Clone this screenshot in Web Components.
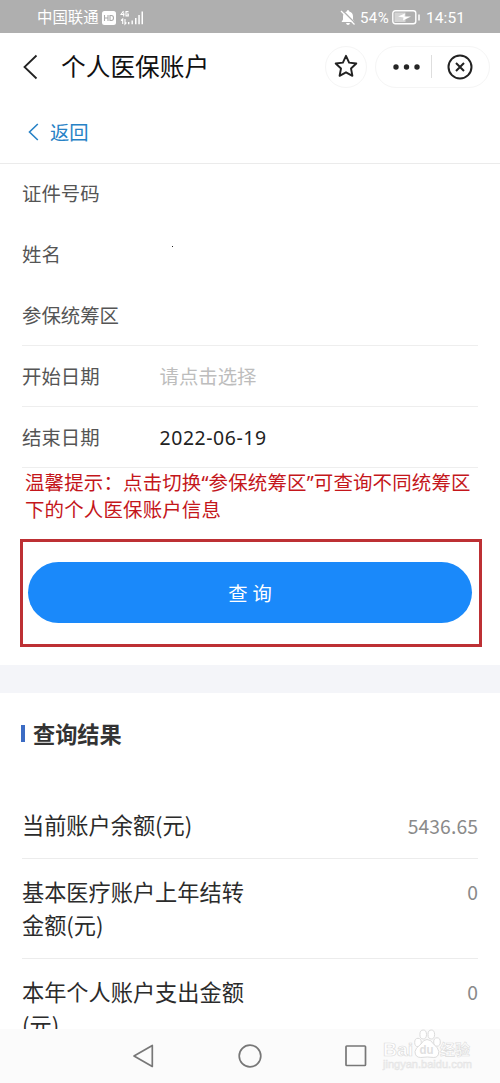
<!DOCTYPE html>
<html lang="zh-CN">
<head>
<meta charset="utf-8">
<title>个人医保账户</title>
<style>
html,body{margin:0;padding:0}
body{width:500px;height:1083px;overflow:hidden;background:#fff;font-family:"Noto Sans","Noto Sans CJK SC",sans-serif}
</style>
</head>
<body>
<medical-app></medical-app>
<script>
function define(name, html, setup) {
  const t = document.createElement('template');
  t.innerHTML = '<style>*{box-sizing:border-box}svg{display:block;flex:none}</style>' + html;
  customElements.define(name, class extends HTMLElement {
    constructor() {
      super();
      this.attachShadow({mode: 'open'}).append(t.content.cloneNode(true));
    }
    connectedCallback() { if (setup) setup(this); }
  });
}

define('status-bar', `<style>
:host{display:flex;align-items:center;height:33px;padding:2px 35px 0 37px;background:#afafaf;color:#fff;font-size:15.4px;line-height:24px;white-space:nowrap}
.hd{margin-left:3px}.sig{margin-left:4px}.bell{margin-left:auto}
.pct{margin-left:4px;font-family:Roboto,sans-serif;font-size:15px;letter-spacing:.4px;width:31px}
.bat{margin-left:1px}.time{margin-left:6px;font-family:Roboto,sans-serif;font-size:15.5px;letter-spacing:.1px;width:39px}
</style>
<span>中国联通</span>
<svg class="hd" width="14" height="14" viewBox="0 0 14 14"><rect width="14" height="14" rx="2.5" fill="#fff"/><path d="M2.5 4v6M6 4v6M2.5 7H6M8 4.5v5h1.4q2.1 0 2.1-2.5T9.400 4.500z" fill="none" stroke="#aaa" stroke-width="1.1"/></svg>
<svg class="sig" width="25" height="16" viewBox="0 0 25 16"><g fill="none" stroke="#fff" stroke-width="1.1"><path d="M3.500 1L1 4.500h3.500M3.700 2.500V6.500M8.500 1.600H6v4.300h2.300V4H7M2.700 14V9L1 10.500M5 9v5l1.400-1.500"/></g><path d="M8 12h1.400v2.300H8zm3.500-1.500h1.400v3.800h-1.400zM15 8h1.500v6.300H15zm3.300-3h1.500v9.300h-1.500zM21.500 1.500H23v12.800h-1.500z" fill="#fff"/></svg>
<svg class="bell" width="16" height="16" viewBox="0 0 16 16"><path d="M8 0q1.200 0 1.300 1.500Q13 2.500 13 6.500v3l1.500 2.500h-13L3 9.500v-3q0-4 3.700-5Q6.800 0 8 0M6 13h4q-.5 2-2 2t-2-2" fill="#fff"/><path d="M2.200.2L15.500 13.500" stroke="#afafaf" stroke-width="1.500"/><path d="M1 1l13.500 13.500" stroke="#fff" stroke-width="1.300"/></svg>
<span class="pct">54%</span>
<svg class="bat" width="28" height="15" viewBox="0 0 28 15"><rect x=".8" y=".8" width="23" height="13" rx="2.500" fill="none" stroke="#fff" stroke-width="1.400"/><rect x="2.500" y="2.500" width="11" height="9.500" fill="#d4d4d4"/><path d="M6 6.500l7-3-.5 3h6.500l-8 4 .5-3z" fill="#fff"/><path d="M27 4.500v6" stroke="#fff" stroke-width="1.500"/></svg>
<span class="time">14:51</span>`);

define('app-header', `<style>
:host{display:flex;align-items:center;height:67px;padding:0 10px 0 22px;color:#111}
h1{margin:0 auto 0 22px;padding-top:1px;font-size:24.700px;line-height:36px;font-weight:400;white-space:nowrap}
.pill{display:flex;align-items:center;height:42px;border:1px solid #f5f5f5;border-radius:21px}
.star{width:42px;justify-content:center;margin-right:8px}
.menu{width:115px;padding-left:17px}
.sep{width:1px;height:23px;background:#dedede;margin:0 15px 0 11px}
</style>
<svg width="17" height="26" viewBox="0 0 17 26"><path d="M14.500 1.500L2.500 13l12 11.500" fill="none" stroke="#222" stroke-width="1.800"/></svg>
<h1><slot></slot></h1>
<div class="pill star"><svg width="24" height="25" viewBox="0 0 24 25"><path d="M12 1.800l3.100 6.800 7.200.9-5.300 5 1.400 7.300L12 18.300l-6.400 3.500L7 14.500l-5.300-5 7.200-.9z" fill="none" stroke="#222" stroke-width="1.900" stroke-linejoin="round"/></svg></div>
<div class="pill menu"><svg width="27" height="6" viewBox="0 0 27 6"><g fill="#252525"><circle cx="3" cy="3" r="2.700"/><circle cx="13.500" cy="3" r="2.700"/><circle cx="24" cy="3" r="2.700"/></g></svg><span class="sep"></span><svg width="26" height="26" viewBox="0 0 26 26"><g fill="none" stroke="#222" stroke-width="2"><circle cx="13" cy="13" r="11.500"/><path d="M9 9l8 8m0-8l-8 8"/></g></svg></div>`);

define('back-link', `<style>
:host{display:flex;align-items:center;height:64px;padding:1px 0 0 28px;border-bottom:1px solid #ebebeb;color:#2782c6;font-size:19.300px;line-height:28px}
span{margin-left:11px;padding-top:1px}
</style>
<svg width="11" height="18" viewBox="0 0 11 18"><path d="M9.800 1L1.500 9l8.300 8" fill="none" stroke="currentColor" stroke-width="1.600"/></svg><span><slot></slot></span>`);

define('form-row', `<style>
:host{display:flex;align-items:center;height:61px;margin:0 22px;padding-top:2px;border-bottom:1px solid transparent;font-size:19.400px;line-height:28px;color:#555;white-space:nowrap}
:host([first]){height:60px;padding-top:0}
:host([line]){border-color:#eee}
label{width:137.5px}
.v{color:#222}
:host([placeholder]) .v{color:#bdbdbd}
:host([date]) .v{letter-spacing:.6px}
</style><label></label><span class="v"><slot></slot></span>`, el => {
  el.shadowRoot.querySelector('label').textContent = el.getAttribute('label');
});

define('dot-mark', `<style>:host{display:block;width:1px;height:1px;margin:-9px 0 0 12.5px;background:#222}</style>`);

define('warm-tip', `<style>
:host{display:block;height:71px;padding:1px 0 0 25px;color:#c4161b;font-size:19.450px;line-height:27px;letter-spacing:.17px;white-space:nowrap}
</style><slot></slot>`);

define('query-button', `<style>
:host{display:flex;align-items:center;height:108px;margin:0 18px 18px 20px;padding:0 7px 1px 5px;border:3px solid #bd3034}
button{flex:1;height:61px;border:0;border-radius:31px;background:#1a89fa;color:#fff;font:inherit;font-size:19.300px;line-height:28px;padding:2px 0 0}
</style><button><slot></slot></button>`);

define('section-title', `<style>
:host{display:flex;align-items:center;height:128px;padding:0 0 20px 21px;border-top:28px solid #f4f5f9;color:#333;font-size:22.200px;line-height:32px;font-weight:700}
i{width:4px;height:17px;background:#3c6cc4;margin-right:8px}
span{padding-top:3px}
</style><i></i><span><slot></slot></span>`);

define('result-row', `<style>
:host{display:flex;justify-content:space-between;margin:0 22px;padding:16px 0 17px;border-bottom:1px solid #ececec;font-family:"Noto Sans CJK SC",sans-serif;font-size:22.200px;line-height:33px;color:#2b2b2b}
:host([first]){padding:15px 0 17px}
.l{width:224px;white-space:nowrap}
.v{padding-top:1px;font-size:19.300px;letter-spacing:.1px;color:#8a8a8a}
:host([first]) .v{padding-top:2px;margin-bottom:-2px}
</style><div class="l"><slot></slot></div><div class="v"></div>`, el => {
  el.shadowRoot.querySelector('.v').textContent = el.getAttribute('value');
});

define('system-nav', `<style>
:host{display:flex;align-items:center;height:54px;padding-left:132px;background:#fbfbfb}
.c{margin-left:84px}.s{margin-left:83px}.w{margin-left:15px;align-self:flex-start}
</style>
<svg width="22" height="24" viewBox="0 0 22 24"><path d="M20.300 1.500v21L2 12z" fill="none" stroke="#777" stroke-width="1.700" stroke-linejoin="round"/></svg>
<svg class="c" width="24" height="24" viewBox="0 0 24 24"><circle cx="12" cy="12" r="10.800" fill="none" stroke="#777" stroke-width="1.700"/></svg>
<svg class="s" width="22" height="22" viewBox="0 0 22 22"><rect x="1" y="1" width="19.500" height="19.500" rx=".8" fill="none" stroke="#777" stroke-width="1.700"/></svg>
<svg class="w" width="96" height="44" viewBox="0 0 96 44">
<g fill="#fff" stroke="#dcdcdc" stroke-width="1">
<ellipse cx="36" cy="13.500" rx="3.300" ry="4.200"/><ellipse cx="41.200" cy="5.500" rx="3.300" ry="4.500"/><ellipse cx="49.300" cy="5.500" rx="3.300" ry="4.500"/><ellipse cx="55" cy="13" rx="3.300" ry="4.200"/>
<path d="M45 10.500q4 0 6.500 4.500 5 4 5.300 7.500 0 6-5 6-6.500-1-13 0-5.800 0-5.800-6 0-3 6-7.500Q41.500 10.500 45 10.500z"/>
</g>
<g font-family="Liberation Sans, sans-serif" font-weight="700" fill="#fff" stroke="#dcdcdc" stroke-width=".7">
<text x="1" y="27" font-size="19" textLength="30" lengthAdjust="spacingAndGlyphs">Bai</text>
<text x="37.500" y="25" font-size="13" textLength="14" lengthAdjust="spacingAndGlyphs" fill="#e0e0e0" stroke="none">du</text>
<text x="58" y="25.500" font-size="15" font-family="Noto Sans CJK SC, sans-serif" textLength="30" lengthAdjust="spacingAndGlyphs" stroke-width=".6">经验</text></g>
<text x="1" y="39" font-family="Liberation Sans, sans-serif" font-size="10.500" fill="#f4f4f4" stroke="#e4e4e4" stroke-width=".5" textLength="89" lengthAdjust="spacingAndGlyphs">jingyan.baidu.com</text>
</svg>`);

define('medical-app', `<style>
:host{display:flex;flex-direction:column;width:500px;height:1083px;overflow:hidden;background:#fff}
main{flex:1;min-height:0;overflow:hidden}
</style>
<status-bar></status-bar>
<app-header>个人医保账户</app-header>
<main>
<back-link>返回</back-link>
<form-row first label="证件号码"></form-row>
<form-row label="姓名"><dot-mark></dot-mark></form-row>
<form-row line label="参保统筹区"></form-row>
<form-row line placeholder label="开始日期">请点击选择</form-row>
<form-row line date label="结束日期">2022-06-19</form-row>
<warm-tip>温馨提示：点击切换“参保统筹区”可查询不同统筹区<br>下的个人医保账户信息</warm-tip>
<query-button>查 询</query-button>
<section-title>查询结果</section-title>
<result-row first value="5436.65">当前账户余额(元)</result-row>
<result-row value="0">基本医疗账户上年结转<br>金额(元)</result-row>
<result-row value="0">本年个人账户支出金额<br>(元)</result-row>
</main>
<system-nav></system-nav>`);
</script>
</body>
</html>
